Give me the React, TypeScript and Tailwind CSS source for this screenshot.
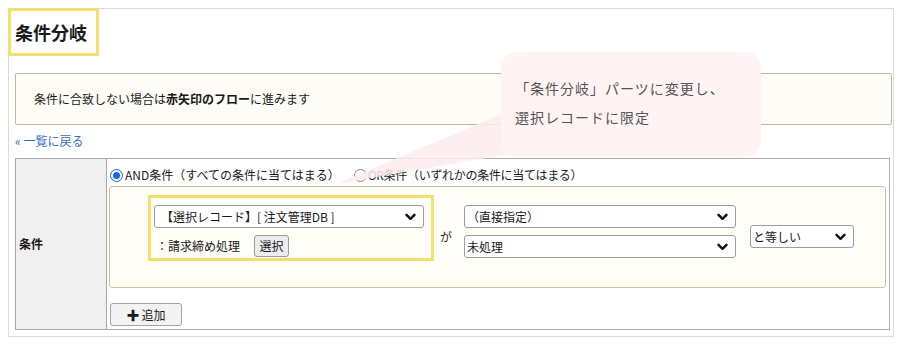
import React from "react";

const font = {
  fontFamily: '"Noto Sans CJK JP", "Noto Sans", sans-serif',
};

function Chevron() {
  return (
    <svg width="11" height="8" viewBox="0 0 11 8" className="shrink-0">
      <polyline
        points="1.5,1.8 5.5,5.8 9.5,1.8"
        fill="none"
        stroke="#111"
        strokeWidth="2.4"
        strokeLinecap="round"
        strokeLinejoin="round"
      />
    </svg>
  );
}

function FakeSelect({
  label,
  className,
}: {
  label: string;
  className?: string;
}) {
  return (
    <div
      className={
        "flex h-[23px] items-center justify-between rounded-[3px] border border-[#9d9d9d] bg-white pr-[7px] text-[12px] leading-none text-[#1a1a1a] " +
        (className || "")
      }
    >
      <span className="whitespace-nowrap">{label}</span>
      <Chevron />
    </div>
  );
}

function Radio({ checked }: { checked?: boolean }) {
  if (checked)
    return (
      <span className="flex h-[13px] w-[13px] shrink-0 items-center justify-center rounded-full border border-[#1268e6] bg-white">
        <span className="h-[7px] w-[7px] rounded-full bg-[#1268e6]" />
      </span>
    );
  return (
    <span className="block h-[13px] w-[13px] shrink-0 rounded-full border border-[#8a8a8a] bg-white" />
  );
}

export default function App() {
  return (
    <div
      className="relative h-[344px] w-[899px] overflow-hidden bg-white pl-[8px] pt-[8px] text-[#1a1a1a]"
      style={font}
    >
      <div className="h-[329px] w-[886px] border border-[#dcdcdc]">
        <div className="-ml-px -mt-px flex h-[48px] w-[91px] items-center border-[3px] border-[#f4e06c] pl-[4px] text-[18px] font-bold leading-none">
          条件分岐
        </div>

        <div className="ml-[6px] mt-[17px] flex h-[52px] w-[877px] items-center rounded-[2px] border border-[#beb89d] bg-[#fdfcf6] pl-[18px] text-[12px] leading-none">
          条件に合致しない場合は<b className="font-bold">赤矢印のフロー</b>に進みます
        </div>

        <div className="ml-[6px] mt-[8px] h-[16px] text-[12px] leading-[16px] text-[#3a6cc4]">
          « 一覧に戻る
        </div>

        <div className="ml-[6px] mt-[9px] flex h-[172px] w-[875px] border border-[#a9a9a9]">
          <div className="flex w-[91px] shrink-0 items-center border-r border-[#a9a9a9] bg-[#f0f0f0] pl-[3px] text-[12px] font-bold leading-none">
            条件
          </div>

          <div className="flex flex-1 flex-col pl-[2px] pt-[6px]">
            <div className="flex h-[20px] items-center pl-[1px] text-[12px] leading-none">
              <Radio checked />
              <span className="ml-[2px]">AND条件（すべての条件に当てはまる）</span>
              <span className="ml-[14px]">
                <Radio />
              </span>
              <span className="ml-[1px] tracking-[-0.3px]">OR条件（いずれかの条件に当てはまる）</span>
            </div>

            <div className="mt-px flex h-[102px] w-[777px] items-start rounded-[3px] border border-[#cbc39e] bg-[#fffdf7] pt-[8px]">
              <div className="ml-[38px] h-[66px] w-[286px] shrink-0 border-[3px] border-[#f4e06c] px-[3px] pt-[7px]">
                <FakeSelect
                  label="【選択レコード】[ 注文管理DB ]"
                  className="w-[270px] pl-[6px]"
                />
                <div className="mt-[7px] flex items-center text-[12px] leading-none">
                  <span className="pl-[2px]">：請求締め処理</span>
                  <span className="ml-[14px] flex h-[22px] w-[35px] items-center justify-center rounded-[3px] border border-[#9a9a9a] bg-[#ececec]">
                    選択
                  </span>
                </div>
              </div>

              <div className="ml-[6px] mt-[36px] text-[12px] leading-none">が</div>

              <div className="ml-[12px] mt-[10px] flex flex-col gap-[7px]">
                <FakeSelect label="（直接指定）" className="w-[272px] pl-[2px]" />
                <FakeSelect label="未処理" className="w-[272px] pl-[2px]" />
              </div>

              <FakeSelect
                label="と等しい"
                className="ml-[14px] mt-[30px] w-[104px] pl-[2px]"
              />
            </div>

            <div className="ml-px mt-[15px] flex h-[23px] w-[72px] items-center justify-center rounded-[3px] border border-[#a3a3a3] bg-[#f3f3f3] text-[12px] leading-none">
              <span className="mr-[2px] text-[13px] font-bold">✚</span>追加
            </div>
          </div>
        </div>
      </div>

      {/* callout tail */}
      <svg
        className="pointer-events-none absolute left-0 top-0"
        width="899"
        height="344"
      >
        <polygon points="336,184 506,112 522,152" fill="#fdecec" opacity="0.85" />
      </svg>

      {/* callout */}
      <div className="absolute left-[501px] top-[52px] h-[105px] w-[260px] rounded-[16px] bg-[#fff3f3] pl-[14px] pt-[22px] text-[14px] leading-[29px] tracking-[1px] text-[#555]">
        <div>「条件分岐」パーツに変更し、</div>
        <div>選択レコードに限定</div>
      </div>
    </div>
  );
}
